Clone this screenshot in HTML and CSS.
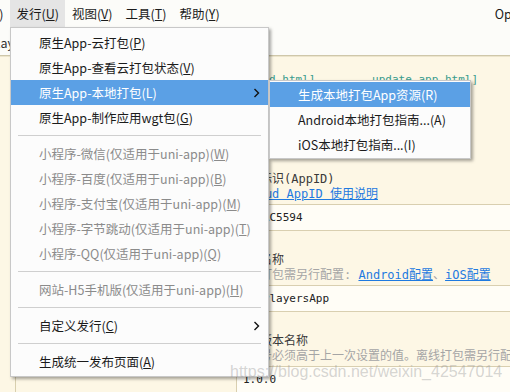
FILE: index.html
```html
<!DOCTYPE html>
<html lang="zh-CN">
<head>
  <meta charset="UTF-8">
  <meta name="viewport" content="width=device-width, initial-scale=1.0">
  <title>HBuilderX - 发行</title>
  <link rel="stylesheet" href="styles.css">
</head>
<body>
  <div class="window">
    <div class="menubar">
      <span class="menubar-item menubar-first">运行(R)</span>
      <span class="menubar-item is-open">发行(<u>U</u>)</span>
      <span class="menubar-item">视图(<u>V</u>)</span>
      <span class="menubar-item">工具(<u>T</u>)</span>
      <span class="menubar-item">帮助(<u>Y</u>)</span>
      <span class="window-title">OpenPlayersApp</span>
    </div>
    <div class="toolbar">
      <span class="project-name">PlayersApp</span>
    </div>

    <div class="workspace">
      <div class="sidebar"></div>
      <div class="editor">
        <!-- manifest 左侧导航，被菜单挡住 -->
        <div class="editor-nav">
          <div class="nav-item">基础配置</div>
          <div class="nav-item">App图标配置</div>
          <div class="nav-item">App启动界面配置</div>
          <div class="nav-item">App模块配置</div>
          <div class="nav-item">App权限配置</div>
        </div>

        <div class="editor-form">
          <div class="doc-links">
            <span>[build.html]</span>
            <span class="doc-link-2">update.app.html]</span>
          </div>

          <div class="fields">
            <div class="field">
              <div class="field-label">应用标识(AppID)</div>
              <div class="field-desc"><a class="link">DCloud AppID 使用说明</a></div>
              <div class="field-input">8F2AC5594</div>
            </div>
            <div class="field">
              <div class="field-label">应用名称</div>
              <div class="field-desc">离线打包需另行配置: <a class="link">Android配置</a>、<a class="link">iOS配置</a></div>
              <div class="field-input">uniPlayersApp</div>
            </div>
            <div class="field">
              <div class="field-label">应用版本名称</div>
              <div class="field-desc">版本号必须高于上一次设置的值。离线打包需另行配置: Android配置</div>
              <div class="field-input">1.0.0</div>
            </div>
          </div>
        </div>
      </div>
    </div>
  </div>

  <!-- 发行 下拉菜单 -->
  <div class="menu menu-publish">
    <div class="menu-item">原生App-云打包(<u>P</u>)</div>
    <div class="menu-item">原生App-查看云打包状态(<u>V</u>)</div>
    <div class="menu-item is-active">原生App-本地打包(L)
      <svg class="arrow" width="7" height="10" viewBox="0 0 7 10"><polyline points="1.5,1 5.5,5 1.5,9" fill="none" stroke="#111" stroke-width="1.4"/></svg>
    </div>
    <div class="menu-item">原生App-制作应用wgt包(<u>G</u>)</div>
    <div class="menu-sep"></div>
    <div class="menu-item is-disabled">小程序-微信(仅适用于uni-app)(<u>W</u>)</div>
    <div class="menu-item is-disabled">小程序-百度(仅适用于uni-app)(<u>B</u>)</div>
    <div class="menu-item is-disabled">小程序-支付宝(仅适用于uni-app)(<u>M</u>)</div>
    <div class="menu-item is-disabled">小程序-字节跳动(仅适用于uni-app)(<u>T</u>)</div>
    <div class="menu-item is-disabled">小程序-QQ(仅适用于uni-app)(<u>Q</u>)</div>
    <div class="menu-sep"></div>
    <div class="menu-item is-disabled">网站-H5手机版(仅适用于uni-app)(<u>H</u>)</div>
    <div class="menu-sep"></div>
    <div class="menu-item">自定义发行(<u>C</u>)
      <svg class="arrow" width="7" height="10" viewBox="0 0 7 10"><polyline points="1.5,1 5.5,5 1.5,9" fill="none" stroke="#111" stroke-width="1.4"/></svg>
    </div>
    <div class="menu-sep"></div>
    <div class="menu-item">生成统一发布页面(<u>A</u>)</div>
  </div>

  <!-- 本地打包 子菜单 -->
  <div class="menu menu-local">
    <div class="menu-item is-active">生成本地打包App资源(R)</div>
    <div class="menu-item">Android本地打包指南...(A)</div>
    <div class="menu-item">iOS本地打包指南...(I)</div>
  </div>

  <div class="watermark">https://blog.csdn.net/weixin_42547014</div>
</body>
</html>
```

FILE: styles.css
```css
/***----BASIC----***/
body {
  margin: 0;
  width: 510px;
  height: 392px;
  overflow: hidden;
  position: relative;
  background: #fdf7e5;
  font-family: 'Noto Sans CJK SC', sans-serif;
  font-size: 12.5px;
  color: #1b1b1b;
}
.window {
  display: flex;
  flex-direction: column;
  height: 100%;
}

/***----Menubar----***/
.menubar {
  display: flex;
  height: 27px;
  background: #fcfcf9;
  white-space: nowrap;
}
.menubar-item {
  padding: 0 6px;
  line-height: 27px;
  flex: none;
}
.menubar-item + .menubar-item {
  margin-left: 1px;
}
.menubar-first {
  margin-left: -44px;
}
.menubar-item.is-open {
  background: #e5e5e5;
}
.window-title {
  margin-left: 269px;
  line-height: 27px;
  flex: none;
}
u {
  text-decoration: underline;
  text-underline-offset: 1px;
}

/***----Toolbar----***/
.toolbar {
  height: 28px;
  background: #fcfcf9;
  border-bottom: 1px solid #cfc7aa;
  box-shadow: 0 1px 0 #ece5cc;
  white-space: nowrap;
  overflow: hidden;
}
.project-name {
  display: inline-block;
  margin-left: -11px;
  line-height: 31px;
  color: #333;
}

/***----Workspace----***/
.workspace {
  flex: 1;
  display: flex;
  margin-top: 1px;
  overflow: hidden;
}
.sidebar {
  width: 15px;
  flex: none;
  border-right: 1px solid #d8cfae;
}
.editor {
  flex: 1;
  display: flex;
  overflow: hidden;
}
.editor-nav {
  width: 220px;
  flex: none;
  padding-top: 40px;
}
.nav-item {
  line-height: 30px;
  padding-left: 20px;
  color: #555;
}
.editor-form {
  width: 420px;
  flex: none;
}

.doc-links {
  padding-top: 16px;
  font: 11px/14px 'DejaVu Sans Mono', monospace;
  color: #3a9c8e;
  white-space: nowrap;
}
.doc-link-2 {
  margin-left: 50px;
}

/***----Form----***/
.fields {
  margin-top: 85px;
}
.field {
  margin-bottom: 22px;
}
.field-label,
.field-desc {
  font: 12px/15px 'DejaVu Sans Mono', 'Noto Sans CJK SC', monospace;
  white-space: nowrap;
}
.field-label {
  color: #3a3a3a;
}
.field-desc {
  color: #a5a5a5;
  padding-bottom: 2px;
}
.link {
  color: #1f7ae0;
  text-decoration: underline;
}
.field-input {
  box-sizing: border-box;
  height: 27px;
  padding-left: 6px;
  border: 1px solid #d9cfb0;
  border-right: none;
  background: #fffdf6;
  font: 11px/25px 'DejaVu Sans Mono', monospace;
  color: #222;
}

/***----Menus----***/
.menu {
  position: absolute;
  box-sizing: border-box;
  background: #fcfcfc;
  border: 1px solid #c8c8c8;
  box-shadow: 2px 2px 3px rgba(0, 0, 0, 0.35);
  white-space: nowrap;
}
.menu-publish {
  left: 10px;
  top: 27px;
  width: 259px;
  padding: 2px 0;
}
.menu-local {
  left: 269px;
  top: 80px;
  width: 202px;
  padding: 1px 0;
}
.menu-item {
  display: flex;
  align-items: center;
  height: 25px;
  padding: 0 8px 0 28px;
}
.menu-item.is-active {
  background: #5ba0e5;
  color: #fff;
}
.menu-item.is-disabled {
  color: #8b8b8b;
}
.menu-item .arrow {
  margin-left: auto;
}
.menu-sep {
  height: 1px;
  margin: 5px 7px;
  background: #cfcfcf;
}

/* CSDN 水印 */
.watermark {
  position: absolute;
  left: 230px;
  top: 363px;
  font: 16px/18px 'Liberation Sans', sans-serif;
  color: rgba(150, 150, 150, 0.4);
  white-space: nowrap;
}
```
